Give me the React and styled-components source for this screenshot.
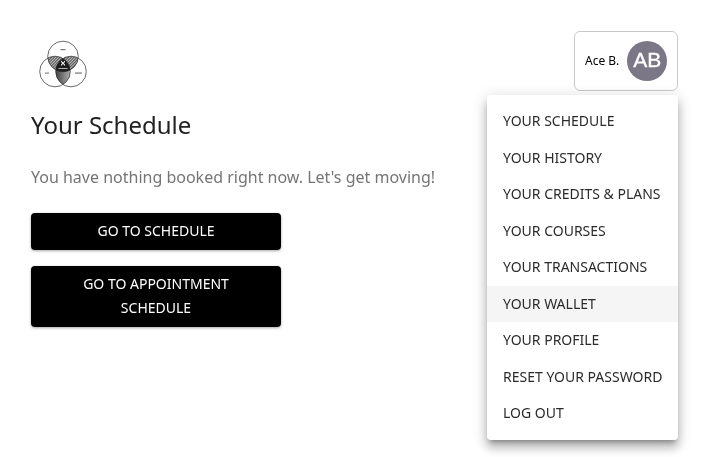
import React from 'react';
import styled, { createGlobalStyle } from 'styled-components';

const menuItems = [
  'YOUR SCHEDULE',
  'YOUR HISTORY',
  'YOUR CREDITS & PLANS',
  'YOUR COURSES',
  'YOUR TRANSACTIONS',
  'YOUR WALLET',
  'YOUR PROFILE',
  'RESET YOUR PASSWORD',
  'LOG OUT',
];

function VennLogo() {
  return (
    <svg width="50" height="50" viewBox="0 0 50 50">
      <defs>
        <clipPath id="top"><circle cx="25" cy="17.5" r="15.3" /></clipPath>
        <clipPath id="left"><circle cx="17" cy="32.5" r="15.3" /></clipPath>
        <clipPath id="right"><circle cx="33" cy="32.5" r="15.3" /></clipPath>
        <pattern id="hatch" width="2" height="2" patternUnits="userSpaceOnUse" patternTransform="rotate(45)">
          <rect width="2" height="2" fill="#b8b8b8" />
          <rect width="1" height="2" fill="#585858" />
        </pattern>
        <linearGradient id="lens" x1="0" x2="1" y1="0" y2="0">
          <stop offset="0" stopColor="#3c3c3c" />
          <stop offset="1" stopColor="#b5b5b5" />
        </linearGradient>
      </defs>
      <g clipPath="url(#top)">
        <g clipPath="url(#left)"><rect width="50" height="50" fill="url(#hatch)" /></g>
        <g clipPath="url(#right)"><rect width="50" height="50" fill="url(#hatch)" /></g>
      </g>
      <g clipPath="url(#left)">
        <g clipPath="url(#right)"><rect x="17" width="16" height="50" fill="url(#lens)" /></g>
      </g>
      <g clipPath="url(#top)">
        <g clipPath="url(#left)">
          <g clipPath="url(#right)"><rect width="50" height="50" fill="#1c1c1c" /></g>
        </g>
      </g>
      <circle cx="25" cy="17.5" r="15.3" fill="none" stroke="#2a2a2a" strokeWidth="0.7" />
      <circle cx="17" cy="32.5" r="15.3" fill="none" stroke="#2a2a2a" strokeWidth="0.7" />
      <circle cx="33" cy="32.5" r="15.3" fill="none" stroke="#2a2a2a" strokeWidth="0.7" />
      <path d="M23 21.5l2 2 2-2v1.5l-1.2 1.2 1.2 1.3v1.5l-2-2-2 2v-1.5l1.2-1.3-1.2-1.2z" fill="#eeeeee" />
      <rect x="20.5" y="29" width="9" height="1" fill="#b0b0b0" />
      <rect x="22.5" y="10" width="5" height="1.2" fill="#777777" />
      <rect x="7" y="33.5" width="4" height="1.2" fill="#888888" />
      <rect x="37" y="33.5" width="7" height="1.2" fill="#777777" />
    </svg>
  );
}

export default function App() {
  return (
    <Page>
      <GlobalStyle />
      <Header>
        <LogoWrap>
          <VennLogo />
        </LogoWrap>
        <ProfileButton>
          <ProfileName>Ace B.</ProfileName>
          <Avatar>AB</Avatar>
        </ProfileButton>
      </Header>
      <Title>Your Schedule</Title>
      <Message>You have nothing booked right now. Let's get moving!</Message>
      <Actions>
        <ActionButton>GO TO SCHEDULE</ActionButton>
        <ActionButton>GO TO APPOINTMENT SCHEDULE</ActionButton>
      </Actions>
      <Menu>
        {menuItems.map((item) => (
          <MenuItem key={item} $active={item === 'YOUR WALLET'}>{item}</MenuItem>
        ))}
      </Menu>
    </Page>
  );
}

const GlobalStyle = createGlobalStyle`
  html, body {
    margin: 0;
    padding: 0;
    background: #ffffff;
  }
  body {
    font-family: 'Noto Sans', sans-serif;
    overflow: hidden;
  }
`;

const Page = styled.div`
  position: relative;
  width: 705px;
  height: 457px;
  box-sizing: border-box;
  padding: 31px 27px 0 31px;
  overflow: hidden;
  will-change: transform;
`;

const Header = styled.header`
  display: flex;
  justify-content: space-between;
  align-items: flex-start;
  height: 60px;
`;

const LogoWrap = styled.div`
  padding: 8px 0 0 7px;
  height: 50px;
`;

const ProfileButton = styled.button`
  display: flex;
  align-items: center;
  gap: 8px;
  width: 104px;
  height: 60px;
  box-sizing: border-box;
  padding: 0 10px;
  background: #ffffff;
  border: 1px solid #c8c8c8;
  border-radius: 6px;
  font-family: 'Noto Sans', sans-serif;
`;

const ProfileName = styled.span`
  padding-bottom: 2px;
  font-size: 12px;
  color: #000000;
  white-space: nowrap;
`;

const Avatar = styled.span`
  display: flex;
  align-items: center;
  justify-content: center;
  width: 40px;
  height: 40px;
  box-sizing: border-box;
  padding-bottom: 2px;
  flex-shrink: 0;
  border-radius: 50%;
  background: #7c7786;
  color: #ffffff;
  font-family: 'Liberation Sans', sans-serif;
  font-size: 21px;
  -webkit-text-stroke: 0.35px #ffffff;
`;

const Title = styled.h1`
  margin: 17px 0 0;
  font-size: 24px;
  line-height: 34px;
  font-weight: 400;
  color: #212121;
`;

const Message = styled.p`
  margin: 23px 0 0;
  font-size: 16px;
  line-height: 24px;
  color: #757575;
`;

const Actions = styled.div`
  display: flex;
  flex-direction: column;
  gap: 16px;
  width: 250px;
  margin-top: 24px;
`;

const ActionButton = styled.button`
  width: 100%;
  padding: 6px 16px 7px;
  border: none;
  border-radius: 4px;
  background: #000000;
  color: #ffffff;
  font-family: 'Noto Sans', sans-serif;
  font-size: 14px;
  line-height: 24px;
  box-shadow: 0 1px 3px rgba(0, 0, 0, 0.35);
`;

const Menu = styled.ul`
  position: absolute;
  top: 95px;
  left: 487px;
  width: 191px;
  box-sizing: border-box;
  margin: 0;
  padding: 8px 0;
  list-style: none;
  background: #ffffff;
  border-radius: 4px;
  box-shadow: 0 5px 5px -3px rgba(0, 0, 0, 0.3), 0 8px 10px 1px rgba(0, 0, 0, 0.18), 0 3px 14px 2px rgba(0, 0, 0, 0.14);
`;

const MenuItem = styled.li`
  padding: 6px 16px;
  height: 36.5px;
  box-sizing: border-box;
  font-size: 14px;
  line-height: 24.5px;
  color: #2b2b2b;
  white-space: nowrap;
  background: ${(props) => (props.$active ? '#f5f5f5' : 'transparent')};
`;
